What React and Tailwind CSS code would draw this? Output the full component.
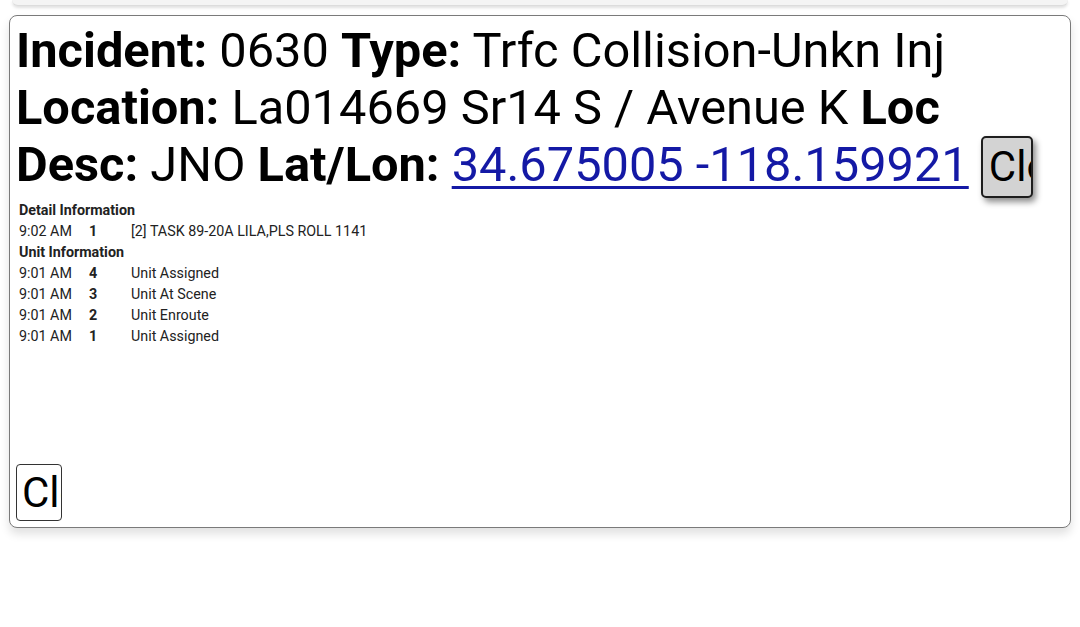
const units = [
  { time: '9:01 AM', num: '4', text: 'Unit Assigned' },
  { time: '9:01 AM', num: '3', text: 'Unit At Scene' },
  { time: '9:01 AM', num: '2', text: 'Unit Enroute' },
  { time: '9:01 AM', num: '1', text: 'Unit Assigned' },
];

function Row({ time, num, text }) {
  return (
    <div className="flex h-[21px] items-center">
      <span className="w-[70px]">{time}</span>
      <span className="w-[42px] font-bold">{num}</span>
      <span>{text}</span>
    </div>
  );
}

export default function App() {
  return (
    <div className="min-h-[627px] bg-white font-['Roboto',sans-serif] text-black">
      <div className="mx-[12px] h-[6px] rounded-b-lg border-b border-[#dcdcdc] bg-[#f4f4f4] shadow-[0_2px_3px_rgba(0,0,0,0.12)]" />
      <div className="mx-[9px] mt-[9px] flex h-[513px] flex-col rounded-lg border border-[#7a7a7a] bg-white pl-[6px] pr-[7px] pt-[6px] shadow-[0_6px_10px_rgba(0,0,0,0.12)]">
        <div className="text-[48.75px] leading-[57px]">
          <div>
            <b>Incident:</b> 0630 <b>Type:</b> Trfc Collision-Unkn Inj
          </div>
          <div>
            <b>Location:</b> La014669 Sr14 S / Avenue K <b>Loc</b>
          </div>
          <div className="whitespace-nowrap">
            <b>Desc:</b> JNO <b>Lat/Lon:</b>{' '}
            <a href="#" className="text-[#1419a5] underline decoration-[3px] underline-offset-[5px]">
              34.675005 -118.159921
            </a>{' '}
            <button
              type="button"
              className="relative top-[-1px] inline-flex h-[62px] w-[52px] items-center overflow-hidden whitespace-nowrap rounded-[5px] border-2 border-[#1e1e1e] bg-[#d3d3d3] pl-[6px] align-middle text-[42px] leading-none shadow-[3px_4px_6px_rgba(0,0,0,0.45)]"
            >
              Close
            </button>
          </div>
        </div>
        <div className="mt-[1px] pl-[3px] text-[14.3px] leading-[21px] text-[#222]">
          <div className="font-bold">Detail Information</div>
          <Row time="9:02 AM" num="1" text="[2] TASK 89-20A LILA,PLS ROLL 1141" />
          <div className="font-bold">Unit Information</div>
          {units.map((u, i) => (
            <Row key={i} {...u} />
          ))}
        </div>
        <div className="mt-auto pb-[6px]">
          <button
            type="button"
            className="flex h-[57px] w-[46px] items-center overflow-hidden whitespace-nowrap rounded-[4px] border border-[#333] bg-white pl-[5px] text-[42px] leading-none"
          >
            Close
          </button>
        </div>
      </div>
    </div>
  );
}
